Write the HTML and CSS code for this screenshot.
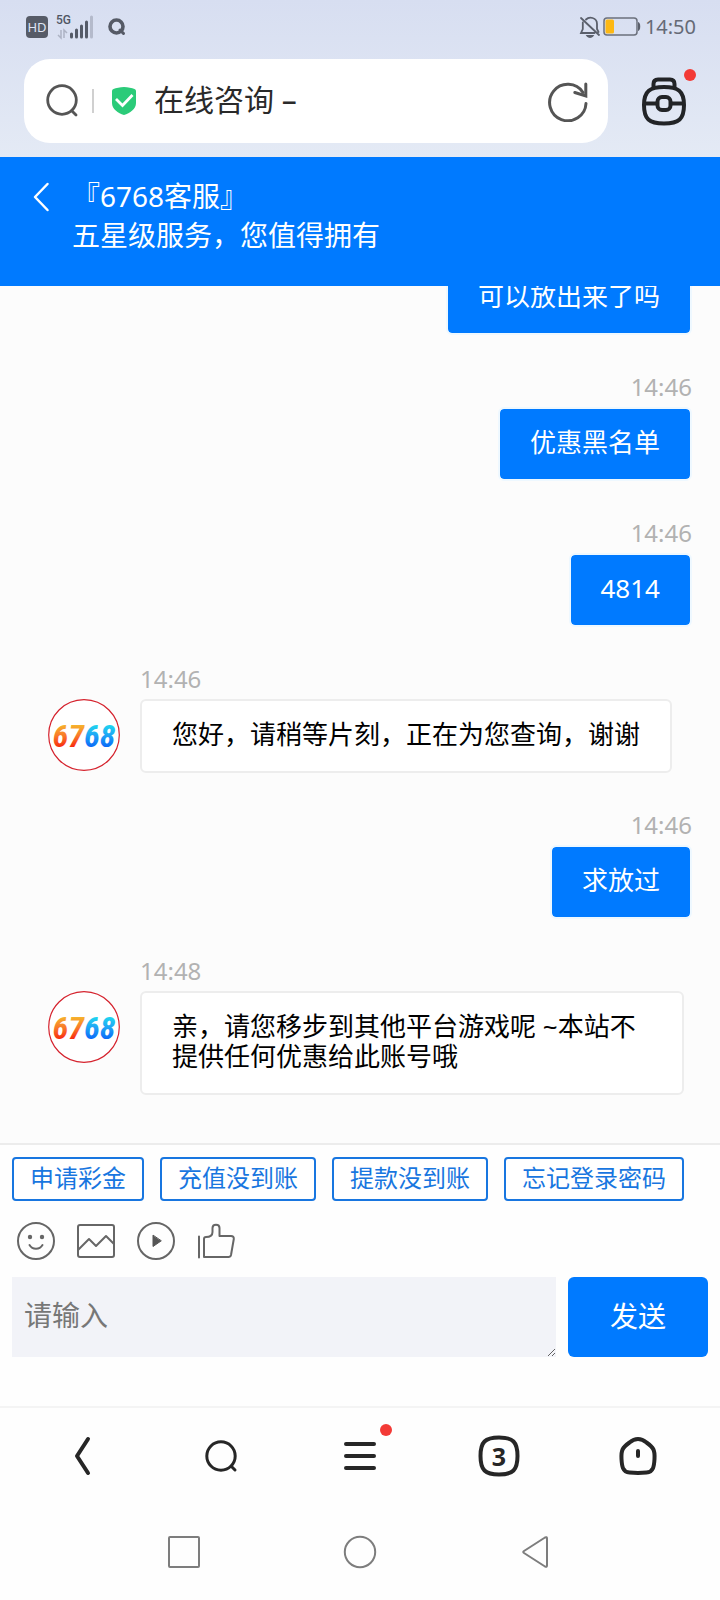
FILE: index.html
```html
<!DOCTYPE html>
<html lang="zh-CN">
<head>
<meta charset="utf-8">
<meta name="viewport" content="width=device-width, initial-scale=1">
<title>在线咨询</title>
<link rel="stylesheet" href="styles.css">
</head>
<body>
<div class="screen">
  <div class="browser-top">
    <div class="status">
      <span class="hd">HD</span>
      <svg class="signal" width="38" height="26" viewBox="0 0 38 26" aria-hidden="true">
        <text x="0" y="10" class="signal-label">5G</text>
        <path d="M5 16v8l-3-3M8 24v-8l3 3" fill="none" stroke="#adb3c4" stroke-width="1.5"/>
        <g stroke="#555b68" stroke-width="3" stroke-linecap="round"><path d="M15.500 20v3M20.500 16v7M25.500 12v11M30.500 8v15"/><path d="M35.500 3v20" stroke="#b4bacb"/></g>
      </svg>
      <svg class="mini" width="18" height="18" viewBox="0 0 18 18" aria-hidden="true"><circle cx="8.500" cy="8.500" r="6.500" fill="none" stroke="#555a66" stroke-width="3.600"/><path d="M12 12l3.500 3.500" stroke="#555a66" stroke-width="3" stroke-linecap="round"/></svg>
      <span class="spacer"></span>
      <svg width="22" height="22" viewBox="0 0 22 22" fill="none" stroke="#5a5f6b" stroke-width="1.800" stroke-linecap="round" aria-hidden="true"><path d="M2 2l18 17M7 3.500C10 .5 18 1 18 8v5l1.500 3M3.800 6.500V13L2 17h13.500"/><path d="M8.500 20c1 1.300 4 1.300 5 0z" fill="#5a5f6b"/></svg>
      <svg class="battery" width="38" height="20" viewBox="0 0 38 20" aria-hidden="true"><rect x="1" y="1" width="33" height="17" rx="3" fill="none" stroke="#6b707c" stroke-width="1.500"/><rect x="2.500" y="2.500" width="8.500" height="14" rx="1.500" fill="#fdb813"/><path d="M35 5c3 0 3 9 0 9z" fill="#5a5f6b"/></svg>
      <span class="clock">14:50</span>
    </div>
    <div class="address-row">
      <div class="address">
        <svg width="34" height="34" viewBox="0 0 34 34" fill="none" stroke="#555" stroke-width="2.800" stroke-linecap="round" aria-hidden="true"><circle cx="16" cy="16" r="14.300"/><path d="M26 27l4 4"/></svg>
        <span class="divider"></span>
        <svg width="26" height="30" viewBox="0 0 26 30" aria-hidden="true"><path d="M13 1c4 0 8 1 10.500 2q1.500.5 1.500 2v12c0 6-6 10-12 12C7 27 1 23 1 17V5q0-1.500 1.500-2C5 2 9 1 13 1z" fill="#2bcb79"/><path d="M5 13l6.500 6.500L21.500 9" fill="none" stroke="#fff" stroke-width="2.800"/></svg>
        <span class="address-title">在线咨询 –</span>
        <button class="icon-button" aria-label="刷新"><svg width="42" height="42" viewBox="0 0 42 42" fill="none" stroke="#555" stroke-width="3" stroke-linecap="round" aria-hidden="true"><path d="M39 23.500A18.200 18.200 0 1 1 36 12.500"/><path d="M38.800 4v12l-11-3.500"/></svg></button>
      </div>
      <button class="icon-button bag" aria-label="工具箱"><svg width="46" height="50" viewBox="0 0 46 50" fill="none" stroke="#222427" stroke-width="4" aria-hidden="true"><path d="M12.500 12V8q0-4.500 4.500-4.500h12q4.500 0 4.500 4.500v4"/><path d="M23 11C37 11 43 15 43 29c0 14-5 18.500-20 18.500S3 43 3 29C3 15 9 11 23 11zM3 27.500h13M30 27.500h13"/><rect x="16.500" y="21" width="13" height="13" rx="4.500"/></svg><span class="dot"></span></button>
    </div>
  </div>

  <header class="chat-header">
    <button class="icon-button back" aria-label="返回"><svg width="18" height="30" viewBox="0 0 18 30" fill="none" stroke="#fff" stroke-width="2.500" stroke-linecap="round" stroke-linejoin="round" aria-hidden="true"><path d="M15.500 2L3 15l12.500 13"/></svg></button>
    <h1 class="chat-title">『6768客服』<br>五星级服务，您值得拥有</h1>
  </header>

  <main class="chat">
    <div class="message mine"><div class="bubble">可以放出来了吗</div></div>
    <div class="message mine"><time>14:46</time><div class="bubble">优惠黑名单</div></div>
    <div class="message mine"><time>14:46</time><div class="bubble">4814</div></div>
    <div class="message theirs">
      <svg class="avatar" width="72" height="72" viewBox="0 0 72 72" role="img" aria-label="6768">
        <defs>
          <linearGradient id="warm" x1="0" y1="0" x2="0" y2="1"><stop offset=".2" stop-color="#f6b52c"/><stop offset=".5" stop-color="#f9772a"/><stop offset=".8" stop-color="#f8290c"/></linearGradient>
          <linearGradient id="cool" x1="0" y1="0" x2="0" y2="1"><stop offset=".2" stop-color="#20d8ef"/><stop offset=".5" stop-color="#1fa2f6"/><stop offset=".8" stop-color="#0868f8"/></linearGradient>
        </defs>
        <circle cx="36" cy="36" r="35.300" fill="#fff" stroke="#d5222d" stroke-width="1.200"/>
        <text class="logo" x="36" y="48" text-anchor="end" fill="url(#warm)">67</text><text class="logo" x="36" y="48" fill="url(#cool)">68</text>
      </svg>
      <time>14:46</time><div class="bubble">您好，请稍等片刻，正在为您查询，谢谢</div>
    </div>
    <div class="message mine"><time>14:46</time><div class="bubble">求放过</div></div>
    <div class="message theirs">
      <svg class="avatar" width="72" height="72" viewBox="0 0 72 72" role="img" aria-label="6768">
        <circle cx="36" cy="36" r="35.300" fill="#fff" stroke="#d5222d" stroke-width="1.200"/>
        <text class="logo" x="36" y="48" text-anchor="end" fill="url(#warm)">67</text><text class="logo" x="36" y="48" fill="url(#cool)">68</text>
      </svg>
      <time>14:48</time><div class="bubble">亲，请您移步到其他平台游戏呢 ~本站不提供任何优惠给此账号哦</div>
    </div>
  </main>

  <section class="composer">
    <div class="chips">
      <button class="chip">申请彩金</button>
      <button class="chip">充值没到账</button>
      <button class="chip">提款没到账</button>
      <button class="chip">忘记登录密码</button>
    </div>
    <div class="tools">
      <button class="icon-button" aria-label="表情"><svg class="tool" viewBox="0 0 40 40" aria-hidden="true"><circle cx="20" cy="20" r="18"/><path d="M13.500 24c3 5 10 5 13 0"/><g fill="#666" stroke="none"><circle cx="14" cy="16" r="2.200"/><circle cx="26" cy="16" r="2.200"/></g></svg></button>
      <button class="icon-button" aria-label="图片"><svg class="tool" viewBox="0 0 40 40" aria-hidden="true"><rect x="2" y="4" width="36" height="32" rx="2"/><path d="M2 29l11-11 7 7 10-10 8 8"/></svg></button>
      <button class="icon-button" aria-label="视频"><svg class="tool" viewBox="0 0 40 40" aria-hidden="true"><circle cx="20" cy="20" r="18"/><path d="M17 14.500v11l8-5.500z" fill="#555" stroke="#555" stroke-width="1"/></svg></button>
      <button class="icon-button" aria-label="评价"><svg class="tool" viewBox="0 0 40 40" aria-hidden="true"><path d="M3 15.500v21M8 36V18q0-2 2-2c4 0 6.500-2 6.500-5V7c0-4.500 7-4.500 7 0v8H35q3 0 2.800 3L35 34q-.5 2-2.500 2z"/></svg></button>
    </div>
    <form class="entry">
      <textarea class="field" aria-label="请输入" placeholder="请输入" rows="1"></textarea>
      <button class="send" type="button">发送</button>
    </form>
  </section>

  <nav class="browser-nav">
    <button class="icon-button" aria-label="后退"><svg width="42" height="42" viewBox="0 0 42 42" class="nav-icon thick" aria-hidden="true"><path d="M27 4L16 21l11 17"/></svg></button>
    <button class="icon-button" aria-label="搜索"><svg width="42" height="42" viewBox="0 0 42 42" class="nav-icon" aria-hidden="true"><circle cx="21" cy="21" r="14.200"/><path d="M31.500 31.500l3.500 3.500"/></svg></button>
    <button class="icon-button" aria-label="菜单"><svg width="42" height="42" viewBox="0 0 42 42" class="nav-icon thick" aria-hidden="true"><path d="M7 9h28M7 21h28M7 33h28"/></svg><span class="dot menu-dot"></span></button>
    <button class="icon-button" aria-label="标签页"><svg width="42" height="42" viewBox="0 0 42 42" class="nav-icon medium" aria-hidden="true"><path d="M21 2.500C35 2.500 39.500 7 39.500 21S35 39.500 21 39.500 2.500 35 2.500 21 7 2.500 21 2.500z"/><text x="21" y="31" text-anchor="middle" class="tab-count">3</text></svg></button>
    <button class="icon-button" aria-label="主页"><svg width="42" height="42" viewBox="0 0 42 42" class="nav-icon medium" aria-hidden="true"><path d="M21 4c3 0 5.500 1 8.500 3.500 7 5 8.500 7.500 8 16.500-.4 7-1 13-8 13.500-6 .6-11 .6-17 0-7-.5-7.600-6.500-8-13.500-.5-9 1-11.500 8-16.500C15.500 5 18 4 21 4zM21 16v5"/></svg></button>
  </nav>
  <nav class="system-nav">
    <button class="icon-button" aria-label="最近任务"><svg width="34" height="34" viewBox="0 0 34 34" class="sys-icon" aria-hidden="true"><rect x="2" y="2" width="30" height="30" rx="1"/></svg></button>
    <button class="icon-button" aria-label="主屏幕"><svg width="34" height="34" viewBox="0 0 34 34" class="sys-icon" aria-hidden="true"><circle cx="17" cy="17" r="15.200"/></svg></button>
    <button class="icon-button" aria-label="返回上一页"><svg width="34" height="34" viewBox="0 0 34 34" class="sys-icon" aria-hidden="true"><path d="M26 2.500q2-1 2 1v27q0 2-2 1L5 18q-1.500-1 0-2z"/></svg></button>
  </nav>
</div>
</body>
</html>
```
FILE: styles.css
```css
* { box-sizing: border-box; }

body {
  margin: 0;
  font-family: "Noto Sans", "Noto Sans CJK SC", sans-serif;
  background: #fefefe;
}

button, textarea { font: inherit; }

svg { display: block; flex: none; }

.screen {
  display: flex;
  flex-direction: column;
  height: 100vh;
}

.icon-button {
  position: relative;
  display: block;
  flex: none;
  padding: 0;
  border: 0;
  background: none;
}

.dot {
  position: absolute;
  top: -7px;
  right: -9px;
  width: 12px;
  height: 12px;
  border-radius: 50%;
  background: #f33a36;
}

.browser-top {
  flex: none;
  padding: 0 24px 14px;
  background: linear-gradient(#d7def1, #e4eaf5);
}

.status {
  display: flex;
  align-items: center;
  height: 54px;
  padding-left: 2px;
}

.hd {
  width: 22px;
  border-radius: 4px;
  background: #565b67;
  color: #dfe5f5;
  font-size: 13px;
  line-height: 22px;
  text-align: center;
}

.signal { margin-left: 8px; }
.signal-label { font: 500 12px Roboto, sans-serif; fill: #4f5562; }
.mini { margin-left: 14px; }
.spacer { flex: 1; }
.battery { margin: 0 4px 0 2px; }

.clock {
  font-size: 20px;
  line-height: 24px;
  color: #656a76;
}

.address-row {
  display: flex;
  align-items: center;
  gap: 33px;
  padding-top: 5px;
}

.address {
  display: flex;
  flex: 1;
  align-items: center;
  height: 84px;
  padding: 0 19px 0 22px;
  border-radius: 26px;
  background: #fff;
}

.divider {
  width: 2px;
  height: 24px;
  margin: 0 17px 0 12px;
  background: #d0d0d0;
}

.address-title {
  flex: 1;
  margin-left: 17px;
  padding-bottom: 2px;
  font-size: 30px;
  line-height: 40px;
  color: #2a2a2a;
}

.bag { margin-right: 9px; }

.chat-header {
  display: flex;
  flex: none;
  align-items: flex-start;
  gap: 22px;
  padding: 20px 32px 31px;
  background: #007aff;
  color: #fff;
}

.back { padding-top: 5px; }

.chat-title {
  margin: 0;
  font-size: 28px;
  font-weight: 400;
  line-height: 39px;
}

.chat {
  display: flex;
  flex: 1;
  flex-direction: column;
  justify-content: flex-end;
  min-height: 0;
  padding: 0 28px 48px 48px;
  overflow: hidden;
  background: #fcfcfc;
}

.message {
  display: grid;
  flex: none;
  row-gap: 4px;
  padding-top: 36px;
}

.mine { justify-items: end; }

.theirs {
  grid-template-columns: 72px auto;
  column-gap: 20px;
  justify-content: start;
  padding-right: 8px;
}

.theirs time, .theirs .bubble { grid-column: 2; }
.theirs time { grid-row: 1; }
.avatar { grid-column: 1; grid-row: 2; }

time {
  font-size: 24px;
  line-height: 32px;
  color: #b2b2b2;
}

.bubble {
  padding: 18px 30px 22px;
  border: 2px solid #ededed;
  border-radius: 6px;
  background: #fff;
  color: #000;
  font-size: 26px;
  line-height: 30px;
}

.mine .bubble {
  border-color: #eef8ff;
  background: #007aff;
  background-clip: padding-box;
  color: #fff;
}

.logo {
  font: italic 700 32px "Liberation Sans Narrow", "Roboto Condensed", "Open Sans Condensed", "DejaVu Sans Condensed", sans-serif;
}

.composer {
  flex: none;
  padding: 12px 12px 49px;
  border-top: 2px solid #ececec;
  background: #fefefe;
}

.chips {
  display: flex;
  flex-wrap: wrap;
  gap: 16px;
}

.chip {
  padding: 0 16px 2px;
  border: 2px solid #1876e0;
  border-radius: 4px;
  background: #fff;
  color: #1876e0;
  font-size: 24px;
  line-height: 38px;
}

.tools {
  display: flex;
  gap: 20px;
  padding: 20px 4px 16px;
}

.tool {
  width: 40px;
  height: 40px;
  fill: none;
  stroke: #666;
  stroke-width: 2;
  stroke-linecap: round;
  stroke-linejoin: round;
}

.entry {
  display: flex;
  gap: 12px;
}

.field {
  flex: 1;
  min-width: 0;
  height: 80px;
  padding: 18px 12px;
  border: 0;
  background: #f2f3f8;
  font-size: 28px;
  line-height: 40px;
}

.field::placeholder { color: #777; }

.send {
  width: 140px;
  padding: 0 0 4px;
  border: 0;
  border-radius: 6px;
  background: #007aff;
  color: #fff;
  font-size: 28px;
}

.browser-nav {
  display: flex;
  flex: none;
  align-items: center;
  justify-content: space-around;
  height: 98px;
  padding: 0 12px;
  border-top: 2px solid #f4f4f4;
}

.nav-icon {
  fill: none;
  stroke: #262626;
  stroke-width: 3;
  stroke-linecap: round;
  stroke-linejoin: round;
}

.nav-icon.medium { stroke-width: 4; }
.nav-icon.thick { stroke-width: 4; }

.tab-count {
  font: 700 25px "Noto Sans", sans-serif;
  fill: #262626;
  stroke: none;
}

.menu-dot {
  top: -11px;
  right: -11px;
}

.system-nav {
  display: flex;
  flex: none;
  align-items: center;
  justify-content: space-around;
  height: 96px;
  padding: 0 96px;
}

.sys-icon {
  fill: none;
  stroke: #7d7d7d;
  stroke-width: 2;
  stroke-linejoin: round;
}
```
